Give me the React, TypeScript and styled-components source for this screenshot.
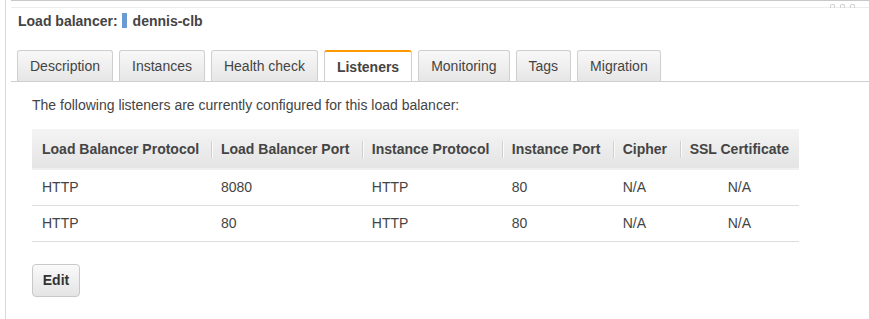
import styled, { createGlobalStyle } from 'styled-components';

const GlobalStyle = createGlobalStyle`
  body {
    margin: 0;
    background: #fff;
    font-family: Arial, "Liberation Sans", sans-serif;
    color: #444;
  }
`

const Frame = styled.div`
  position: relative;
  margin-left: 5px;
  min-height: 319px;
  border-left: 1px solid #d9d9d9;
  padding-left: 5px;
  box-sizing: border-box;
`

const TopRule = styled.div`
  height: 1px;
  background: #c8c8c8;
`

const SubRule = styled.div`
  height: 1px;
  margin-top: 6px;
  background: #ececec;
`

const Grip = styled.div`
  position: absolute;
  top: 4px;
  right: 14px;
  display: flex;
  gap: 5px;
`

const GripDot = styled.span`
  width: 5px;
  height: 4px;
  border: 1px solid #cfcfcf;
  border-bottom: none;
  border-radius: 2px 2px 0 0;
  box-sizing: border-box;
`

const Title = styled.h1`
  display: flex;
  align-items: center;
  margin: 0;
  padding: 0 0 0 7px;
  height: 25px;
  font-size: 14px;
  font-weight: bold;
  color: #444;
`

const NameMark = styled.span`
  display: inline-block;
  width: 5px;
  height: 15px;
  margin: 0 6px 0 4px;
  background: #6b9bd2;
`

const TabStrip = styled.div`
  display: flex;
  gap: 6px;
  margin-top: 17px;
  padding-left: 6px;
  border-bottom: 1px solid #cfcfcf;
`

const Tab = styled.div<{ $active?: boolean }>`
  height: 31px;
  line-height: 31px;
  padding: 0 12px;
  font-size: 14px;
  font-weight: ${p => (p.$active ? 'bold' : 'normal')};
  color: #444;
  border: 1px solid #cfcfcf;
  border-bottom: none;
  border-top: ${p => (p.$active ? '2px solid #f90' : '1px solid #cfcfcf')};
  border-radius: 3px 3px 0 0;
  box-sizing: border-box;
  background: ${p => (p.$active ? '#fff' : 'linear-gradient(#f8f8f8, #e6e6e6)')};
`

const Content = styled.div`
  padding: 15px 0 0 21px;
`

const Intro = styled.p`
  margin: 0 0 16px 0;
  font-size: 14px;
  color: #444;
`

const Table = styled.table`
  width: 767px;
  border-collapse: collapse;
  font-size: 14px;
  color: #444;
`

const HeadCell = styled.th<{ $w: number; $first?: boolean }>`
  position: relative;
  width: ${p => p.$w}px;
  height: 40px;
  padding: 0 10px;
  text-align: left;
  font-weight: bold;
  color: #444;
  white-space: nowrap;
  background: linear-gradient(#f4f4f4, #e4e4e4);
  border-bottom: 2px solid #f0f0f0;
  box-sizing: border-box;

  &::before {
    content: '';
    display: ${p => (p.$first ? 'none' : 'block')};
    position: absolute;
    left: 0;
    top: 12px;
    bottom: 10px;
    width: 1px;
    background: #d0d0d0;
    box-shadow: 1px 0 0 #fafafa;
  }
`

const Cell = styled.td<{ $center?: boolean }>`
  height: 36px;
  padding: 0 10px;
  text-align: ${p => (p.$center ? 'center' : 'left')};
  border-bottom: 1px solid #ddd;
  box-sizing: border-box;
`

const EditButton = styled.button`
  margin-top: 22px;
  width: 48px;
  height: 33px;
  font-family: Arial, "Liberation Sans", sans-serif;
  font-size: 14px;
  font-weight: bold;
  color: #333;
  border: 1px solid #c8c8c8;
  border-radius: 4px;
  background: linear-gradient(#fafafa, #e4e4e4);
`

const tabs = ['Description', 'Instances', 'Health check', 'Listeners', 'Monitoring', 'Tags', 'Migration']

const columns = [
  { label: 'Load Balancer Protocol', w: 179 },
  { label: 'Load Balancer Port', w: 151 },
  { label: 'Instance Protocol', w: 140 },
  { label: 'Instance Port', w: 111 },
  { label: 'Cipher', w: 67 },
  { label: 'SSL Certificate', w: 119 },
]

const listeners = [
  ['HTTP', '8080', 'HTTP', '80', 'N/A', 'N/A'],
  ['HTTP', '80', 'HTTP', '80', 'N/A', 'N/A'],
]

const App = () => {
  return (
    <>
      <GlobalStyle/>
      <Frame>
        <TopRule/>
        <SubRule/>
        <Grip>
          <GripDot/>
          <GripDot/>
          <GripDot/>
        </Grip>
        <Title>
          Load balancer:
          <NameMark/>
          dennis-clb
        </Title>
        <TabStrip>
          {tabs.map(t => (
            <Tab key={t} $active={t === 'Listeners'}>{t}</Tab>
          ))}
        </TabStrip>
        <Content>
          <Intro>The following listeners are currently configured for this load balancer:</Intro>
          <Table>
            <thead>
              <tr>
                {columns.map((c, i) => (
                  <HeadCell key={c.label} $w={c.w} $first={i === 0}>{c.label}</HeadCell>
                ))}
              </tr>
            </thead>
            <tbody>
              {listeners.map((row, r) => (
                <tr key={r}>
                  {row.map((v, i) => (
                    <Cell key={i} $center={i === 5}>{v}</Cell>
                  ))}
                </tr>
              ))}
            </tbody>
          </Table>
          <EditButton>Edit</EditButton>
        </Content>
      </Frame>
    </>
  )
}

export default App
